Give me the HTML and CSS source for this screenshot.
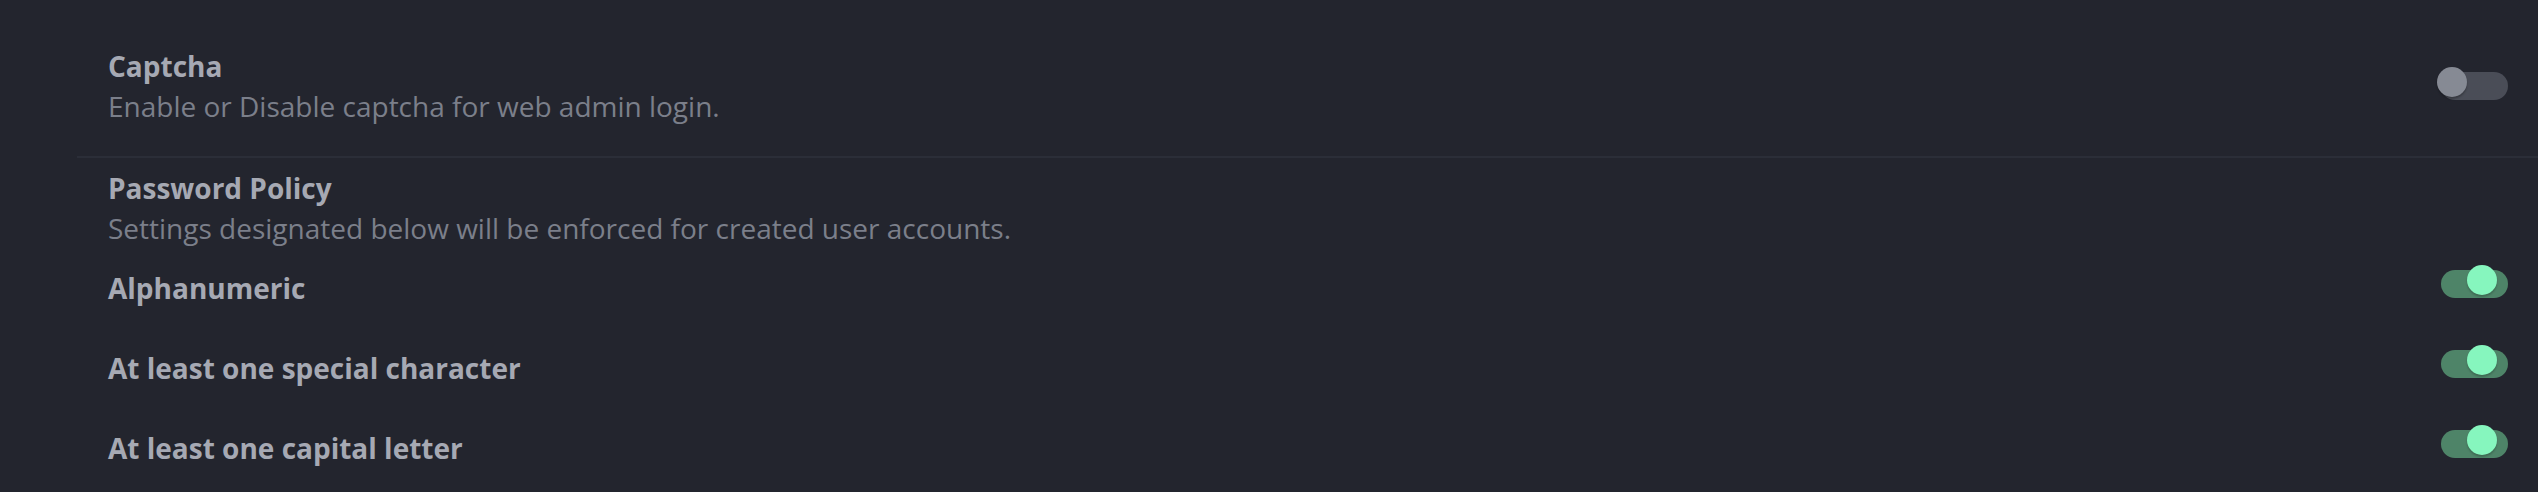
FILE: index.html
```html
<!DOCTYPE html>
<html lang="en">
<head>
<meta charset="utf-8">
<title>Settings</title>
<link rel="stylesheet" href="styles.css">
</head>
<body>
<div class="settings">
  <div class="row row-captcha">
    <div class="text">
      <div class="title">Captcha</div>
      <div class="desc">Enable or Disable captcha for web admin login.</div>
    </div>
    <span class="switch"><span class="knob"></span></span>
  </div>
  <div class="policy">
    <div class="text">
      <div class="title">Password Policy</div>
      <div class="desc">Settings designated below will be enforced for created user accounts.</div>
    </div>
    <div class="row item">
      <div class="title">Alphanumeric</div>
      <span class="switch on"><span class="knob"></span></span>
    </div>
    <div class="row item">
      <div class="title">At least one special character</div>
      <span class="switch on"><span class="knob"></span></span>
    </div>
    <div class="row item">
      <div class="title">At least one capital letter</div>
      <span class="switch on"><span class="knob"></span></span>
    </div>
  </div>
</div>
</body>
</html>
```
FILE: styles.css
```css
html, body {
  margin: 0;
  padding: 0;
  background: #23252e;
  height: 100%;
  overflow: hidden;
}
body {
  font-family: "Open Sans", "Noto Sans", sans-serif;
  font-size: 28px;
  line-height: 40px;
}
.settings {
  margin-left: 77px;
}
.row {
  display: flex;
  align-items: center;
  justify-content: space-between;
  padding: 0 30px 0 31px;
}
.row-captcha {
  padding-top: 46px;
  padding-bottom: 30px;
  border-bottom: 2px solid #2b2e38;
}
.policy {
  padding-top: 10px;
}
.policy > .text {
  padding-left: 31px;
}
.item {
  height: 80px;
}
.title {
  color: #a6a9b3;
  font-weight: 700;
}
.desc {
  color: #7b7f8a;
  font-weight: 400;
}
.switch {
  position: relative;
  display: block;
  width: 67px;
  height: 28px;
  border-radius: 14px;
  background: #4a4d57;
  flex: none;
}
.item .switch {
  margin-bottom: 8px;
}
.knob {
  position: absolute;
  top: -5px;
  left: -4px;
  width: 30px;
  height: 30px;
  border-radius: 50%;
  background: #868a94;
  box-shadow: 0 2px 2px rgba(0, 0, 0, 0.25);
}
.switch.on {
  background: #4e8468;
}
.switch.on .knob {
  left: 26px;
  background: #86f6be;
  box-shadow: 0 2px 2px rgba(0, 0, 0, 0.2);
}
```
